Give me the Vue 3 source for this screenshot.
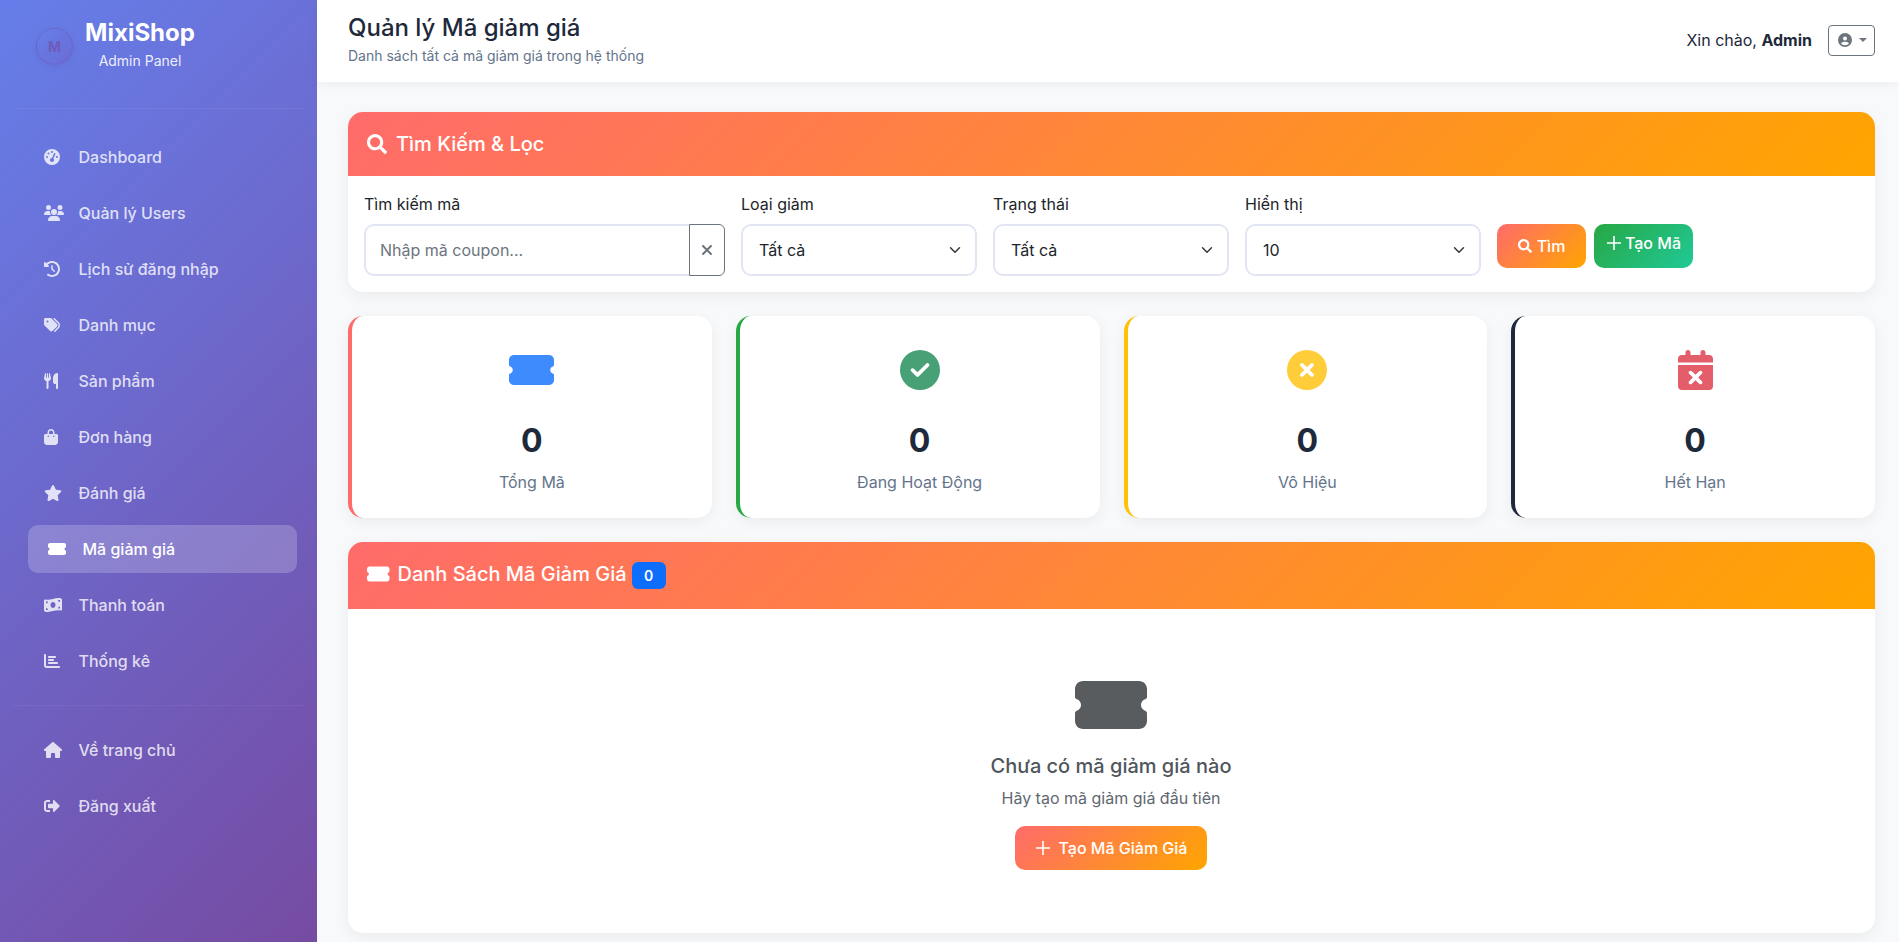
<template>
  <div class="admin-layout">
    <aside class="sidebar">
      <div class="brand">
        <div class="brand-logo">M</div>
        <div class="brand-text">
          <div class="brand-name">MixiShop</div>
          <div class="brand-sub">Admin Panel</div>
        </div>
      </div>

      <nav class="nav-list">
        <a
          v-for="item in navItems"
          :key="item.label"
          class="nav-item"
          :class="{ active: item.active }"
        >
          <span class="nav-icon">
            <svg class="fa" :viewBox="icons[item.icon].box"><path :d="icons[item.icon].d" /></svg>
          </span>
          <span>{{ item.label }}</span>
        </a>
      </nav>

      <div class="nav-divider"></div>

      <nav class="nav-list">
        <a v-for="item in bottomItems" :key="item.label" class="nav-item">
          <span class="nav-icon">
            <svg class="fa" :viewBox="icons[item.icon].box"><path :d="icons[item.icon].d" /></svg>
          </span>
          <span>{{ item.label }}</span>
        </a>
      </nav>
    </aside>

    <div class="main">
      <header class="topbar">
        <div class="topbar-left">
          <h1 class="page-title">Quản lý Mã giảm giá</h1>
          <p class="page-sub">Danh sách tất cả mã giảm giá trong hệ thống</p>
        </div>
        <div class="topbar-right">
          <span class="greeting">Xin chào, <strong>Admin</strong></span>
          <button class="user-btn">
            <svg class="fa" :viewBox="icons.user.box"><path :d="icons.user.d" /></svg>
            <span class="caret"></span>
          </button>
        </div>
      </header>

      <main class="content">
        <section class="panel">
          <div class="panel-head filter-head">
            <svg class="fa" :viewBox="icons.search.box"><path :d="icons.search.d" /></svg>
            <span>Tìm Kiếm &amp; Lọc</span>
          </div>
          <div class="filter-row">
            <div class="field">
              <label>Tìm kiếm mã</label>
              <div class="input-group">
                <input type="text" placeholder="Nhập mã coupon..." />
                <button class="clear-btn">
                  <svg class="fa" :viewBox="icons.xmark.box"><path :d="icons.xmark.d" /></svg>
                </button>
              </div>
            </div>
            <div v-for="f in selects" :key="f.label" class="field">
              <label>{{ f.label }}</label>
              <select>
                <option>{{ f.value }}</option>
              </select>
            </div>
            <div class="filter-actions">
              <button class="btn btn-search">
                <svg class="fa" :viewBox="icons.search.box"><path :d="icons.search.d" /></svg>
                Tìm
              </button>
              <button class="btn btn-create">
                <svg class="plus" viewBox="0 0 16 16"><path d="M8 1v14M1 8h14" /></svg>
                Tạo Mã
              </button>
            </div>
          </div>
        </section>

        <div class="stats">
          <div v-for="s in stats" :key="s.label" class="stat-card" :class="s.tone">
            <svg class="fa stat-icon" :viewBox="icons[s.icon].box"><path :d="icons[s.icon].d" /></svg>
            <div class="stat-value">{{ s.value }}</div>
            <div class="stat-label">{{ s.label }}</div>
          </div>
        </div>

        <section class="panel">
          <div class="panel-head list-head">
            <svg class="fa" :viewBox="icons.ticket.box"><path :d="icons.ticket.d" /></svg>
            <span class="list-title">Danh Sách Mã Giảm Giá</span>
            <span class="badge">0</span>
          </div>
          <div class="empty">
            <svg class="fa empty-icon" :viewBox="icons.ticket.box"><path :d="icons.ticket.d" /></svg>
            <h5>Chưa có mã giảm giá nào</h5>
            <p>Hãy tạo mã giảm giá đầu tiên</p>
            <button class="btn btn-empty">
              <svg class="plus" viewBox="0 0 16 16"><path d="M8 1v14M1 8h14" /></svg>
              Tạo Mã Giảm Giá
            </button>
          </div>
        </section>
      </main>
    </div>
  </div>
</template>

<script setup>
// Font Awesome solid shapes, drawn inline
const icons = {
  gauge: {
    box: "0 0 512 512",
    d: "M0 256a256 256 0 1 1 512 0A256 256 0 1 1 0 256zM288 96a32 32 0 1 0 -64 0 32 32 0 1 0 64 0zM256 416c35.3 0 64-28.7 64-64c0-17.4-6.9-33.1-18.1-44.6L366 161.7c5.3-12.1-.2-26.3-12.3-31.6s-26.3 .2-31.6 12.3L257.9 288c-.6 0-1.3 0-1.9 0c-35.3 0-64 28.7-64 64s28.7 64 64 64zM176 144a32 32 0 1 0 -64 0 32 32 0 1 0 64 0zM96 288a32 32 0 1 0 0-64 32 32 0 1 0 0 64zm352-32a32 32 0 1 0 -64 0 32 32 0 1 0 64 0z",
  },
  users: {
    box: "0 0 640 512",
    d: "M144 0a80 80 0 1 1 0 160A80 80 0 1 1 144 0zM512 0a80 80 0 1 1 0 160A80 80 0 1 1 512 0zM0 298.7C0 239.8 47.8 192 106.7 192h42.7c15.9 0 31 3.5 44.6 9.7c-1.3 7.2-1.9 14.7-1.9 22.3c0 38.2 16.8 72.5 43.3 96c-.2 0-.4 0-.7 0H21.3C9.6 320 0 310.4 0 298.7zM405.3 320c-.2 0-.4 0-.7 0c26.6-23.5 43.3-57.8 43.3-96c0-7.6-.7-15-1.9-22.3c13.6-6.3 28.7-9.7 44.6-9.7h42.7C592.2 192 640 239.8 640 298.7c0 11.8-9.6 21.3-21.3 21.3H405.3zM224 224a96 96 0 1 1 192 0 96 96 0 1 1 -192 0zM128 485.3C128 411.7 187.7 352 261.3 352H378.7C452.3 352 512 411.7 512 485.3c0 14.7-11.9 26.7-26.7 26.7H154.7c-14.7 0-26.7-11.9-26.7-26.7z",
  },
  history: {
    box: "0 0 512 512",
    d: "M75 75L41 41C25.9 25.9 0 36.6 0 57.9V168c0 13.3 10.7 24 24 24H134.1c21.4 0 32.1-25.9 17-41l-30.8-30.8C155 85.5 203 64 256 64c106 0 192 86 192 192s-86 192-192 192c-40.8 0-78.6-12.7-109.7-34.4c-14.5-10.1-34.4-6.6-44.6 7.9s-6.6 34.4 7.9 44.6C151.2 495 201.7 512 256 512c141.4 0 256-114.6 256-256S397.4 0 256 0C185.3 0 121.3 28.7 75 75zm181 53c-13.3 0-24 10.7-24 24V256c0 6.4 2.5 12.5 7 17l72 72c9.4 9.4 24.6 9.4 33.9 0s9.4-24.6 0-33.9l-65-65V152c0-13.3-10.7-24-24-24z",
  },
  tags: {
    box: "0 0 512 512",
    d: "M345 39.1L472.8 168.4c52.4 53 52.4 138.2 0 191.2L360.8 472.9c-9.3 9.4-24.5 9.5-33.9 .2s-9.5-24.5-.2-33.9L438.6 325.9c33.9-34.3 33.9-89.4 0-123.7L310.9 72.9c-9.3-9.4-9.2-24.6 .2-33.9s24.6-9.2 33.9 .2zM0 229.5V80C0 53.5 21.5 32 48 32H197.5c17 0 33.3 6.7 45.3 18.7l168 168c25 25 25 65.5 0 90.5L277.3 442.7c-25 25-65.5 25-90.5 0l-168-168C6.7 262.7 0 246.5 0 229.5zM144 144a32 32 0 1 0 -64 0 32 32 0 1 0 64 0z",
  },
  utensils: {
    box: "0 0 448 512",
    d: "M416 0C400 0 288 32 288 176V288c0 35.3 28.7 64 64 64h32V480c0 17.7 14.3 32 32 32s32-14.3 32-32V352 240 32c0-17.7-14.3-32-32-32zM64 16C64 7.8 57.9 1 49.7 .1S34.2 4.6 32.4 12.5L2.1 148.8C.7 155.1 0 161.5 0 167.9c0 45.9 35.1 83.6 80 87.7V480c0 17.7 14.3 32 32 32s32-14.3 32-32V255.6c44.9-4.1 80-41.8 80-87.7c0-6.4-.7-12.8-2.1-19.1L191.6 12.5c-1.8-8-9.3-13.3-17.4-12.4S160 7.8 160 16V150.2c0 5.4-4.4 9.8-9.8 9.8c-5.1 0-9.3-3.9-9.8-9L127.9 14.6C127.2 6.3 120.3 0 112 0s-15.2 6.3-15.9 14.6L83.7 151c-.5 5.1-4.7 9-9.8 9c-5.4 0-9.8-4.4-9.8-9.8V16zm48.3 152l-.3 0-.3 0 .3-.7 .3 .7z",
  },
  bag: {
    box: "0 0 448 512",
    d: "M160 112c0-35.3 28.7-64 64-64s64 28.7 64 64v48H160V112zm-48 48H48c-26.5 0-48 21.5-48 48V416c0 53 43 96 96 96H352c53 0 96-43 96-96V208c0-26.5-21.5-48-48-48H336V112C336 50.1 285.9 0 224 0S112 50.1 112 112v48zm24 48a24 24 0 1 1 0 48 24 24 0 1 1 0-48zm152 24a24 24 0 1 1 48 0 24 24 0 1 1 -48 0z",
  },
  star: {
    box: "0 0 576 512",
    d: "M316.9 18C311.6 7 300.4 0 288.1 0s-23.4 7-28.8 18L195 150.3 51.4 171.5c-12 1.8-22 10.2-25.7 21.7s-.7 24.2 7.9 32.7L137.8 329 113.2 474.7c-2 12 3 24.2 12.9 31.3s23 8 33.8 2.3l128.3-68.5 128.3 68.5c10.8 5.7 23.9 4.9 33.8-2.3s14.9-19.3 12.9-31.3L438.5 329 542.7 225.9c8.6-8.5 11.7-21.2 7.9-32.7s-13.7-19.9-25.7-21.7L381.2 150.3 316.9 18z",
  },
  ticket: {
    box: "0 0 576 512",
    d: "M0 128C0 92.7 28.7 64 64 64H512c35.3 0 64 28.7 64 64v64c0 8.8-7.4 15.7-15.7 18.6C541.5 217.1 528 235 528 256s13.5 38.9 32.3 45.4c8.3 2.9 15.7 9.8 15.7 18.6v64c0 35.3-28.7 64-64 64H64c-35.3 0-64-28.7-64-64V320c0-8.8 7.4-15.7 15.7-18.6C34.5 294.9 48 277 48 256s-13.5-38.9-32.3-45.4C7.4 207.7 0 200.8 0 192V128z",
  },
  money: {
    box: "0 0 576 512",
    d: "M0 112.5V422.3c0 18 10.1 35 27 41.3c87 32.5 174 10.3 261-11.9c79.8-20.3 159.6-40.7 239.3-18.9c23 6.3 48.7-9.5 48.7-33.4V89.7c0-18-10.1-35-27-41.3C462 15.9 375 38.1 288 60.3C208.2 80.6 128.4 100.9 48.7 79.1C25.6 72.8 0 88.6 0 112.5zM288 352c-44.2 0-80-43-80-96s35.8-96 80-96s80 43 80 96s-35.8 96-80 96zM64 352c35.3 0 64 28.7 64 64H64V352zm64-208c0 35.3-28.7 64-64 64V144h64zM512 304v64H448c0-35.3 28.7-64 64-64zM448 96h64v64c-35.3 0-64-28.7-64-64z",
  },
  chart: {
    box: "0 0 512 512",
    d: "M32 32c17.7 0 32 14.3 32 32V400c0 8.8 7.2 16 16 16H480c17.7 0 32 14.3 32 32s-14.3 32-32 32H80c-44.2 0-80-35.8-80-80V64C0 46.3 14.3 32 32 32zm96 96c0-17.7 14.3-32 32-32l192 0c17.7 0 32 14.3 32 32s-14.3 32-32 32l-192 0c-17.7 0-32-14.3-32-32zm32 64H288c17.7 0 32 14.3 32 32s-14.3 32-32 32H160c-17.7 0-32-14.3-32-32s14.3-32 32-32zm0 96H416c17.7 0 32 14.3 32 32s-14.3 32-32 32H160c-17.7 0-32-14.3-32-32s14.3-32 32-32z",
  },
  home: {
    box: "0 0 576 512",
    d: "M575.8 255.5c0 18-15 32.1-32 32.1h-32l.7 160.2c0 2.7-.2 5.4-.5 8.1V472c0 22.1-17.9 40-40 40H456c-1.1 0-2.2 0-3.3-.1c-1.4 .1-2.8 .1-4.2 .1H416 392c-22.1 0-40-17.9-40-40V448 384c0-17.7-14.3-32-32-32H256c-17.7 0-32 14.3-32 32v64 24c0 22.1-17.9 40-40 40H160 128.1c-1.5 0-3-.1-4.5-.2c-1.2 .1-2.4 .2-3.6 .2H104c-22.1 0-40-17.9-40-40V360c0-.9 0-1.9 .1-2.8V287.6H32c-18 0-32-14-32-32.1c0-9 3-17 10-24L266.4 8c7-7 15-8 22-8s15 2 21 7L564.8 231.5c8 7 12 15 11 24z",
  },
  logout: {
    box: "0 0 512 512",
    d: "M497 273L329 441c-15 15-41 4.5-41-17v-96H152c-13.3 0-24-10.7-24-24v-96c0-13.3 10.7-24 24-24h136V88c0-21.4 25.9-32 41-17l168 168c9.3 9.4 9.3 24.6 0 34zM192 436v-40c0-6.6-5.4-12-12-12H96c-17.7 0-32-14.3-32-32V160c0-17.7 14.3-32 32-32h84c6.6 0 12-5.4 12-12V76c0-6.6-5.4-12-12-12H96c-53 0-96 43-96 96v192c0 53 43 96 96 96h84c6.6 0 12-5.4 12-12z",
  },
  user: {
    box: "0 0 512 512",
    d: "M399 384.2C376.9 345.8 335.4 320 288 320H224c-47.4 0-88.9 25.8-111 64.2c35.2 39.2 86.2 63.8 143 63.8s107.8-24.7 143-63.8zM0 256a256 256 0 1 1 512 0A256 256 0 1 1 0 256zm256 16a72 72 0 1 0 0-144 72 72 0 1 0 0 144z",
  },
  search: {
    box: "0 0 512 512",
    d: "M505 442.7L405.3 343c-4.5-4.5-10.6-7-17-7H372c27.6-35.3 44-79.7 44-128C416 93.1 322.9 0 208 0S0 93.1 0 208s93.1 208 208 208c48.3 0 92.7-16.4 128-44v16.3c0 6.4 2.5 12.5 7 17l99.7 99.7c9.4 9.4 24.6 9.4 33.9 0l28.3-28.3c9.4-9.4 9.4-24.6.1-34zM208 336c-70.7 0-128-57.2-128-128 0-70.7 57.2-128 128-128 70.7 0 128 57.2 128 128 0 70.7-57.2 128-128 128z",
  },
  xmark: {
    box: "0 0 384 512",
    d: "M342.6 150.6c12.5-12.5 12.5-32.8 0-45.3s-32.8-12.5-45.3 0L192 210.7 86.6 105.4c-12.5-12.5-32.8-12.5-45.3 0s-12.5 32.8 0 45.3L146.7 256 41.4 361.4c-12.5 12.5-12.5 32.8 0 45.3s32.8 12.5 45.3 0L192 301.3 297.4 406.6c12.5 12.5 32.8 12.5 45.3 0s12.5-32.8 0-45.3L237.3 256 342.6 150.6z",
  },
  check: {
    box: "0 0 512 512",
    d: "M256 512A256 256 0 1 0 256 0a256 256 0 1 0 0 512zM369 209L241 337c-9.4 9.4-24.6 9.4-33.9 0l-64-64c-9.4-9.4-9.4-24.6 0-33.9s24.6-9.4 33.9 0l47 47L335 175c9.4-9.4 24.6-9.4 33.9 0s9.4 24.6 0 33.9z",
  },
  circleX: {
    box: "0 0 512 512",
    d: "M256 512A256 256 0 1 0 256 0a256 256 0 1 0 0 512zM175 175c9.4-9.4 24.6-9.4 33.9 0l47 47 47-47c9.4-9.4 24.6-9.4 33.9 0s9.4 24.6 0 33.9l-47 47 47 47c9.4 9.4 9.4 24.6 0 33.9s-24.6 9.4-33.9 0l-47-47-47 47c-9.4 9.4-24.6 9.4-33.9 0s-9.4-24.6 0-33.9l47-47-47-47c-9.4-9.4-9.4-24.6 0-33.9z",
  },
  calendarX: {
    box: "0 0 448 512",
    d: "M128 0c17.7 0 32 14.3 32 32V64H288V32c0-17.7 14.3-32 32-32s32 14.3 32 32V64h48c26.5 0 48 21.5 48 48v48H0V112C0 85.5 21.5 64 48 64H96V32c0-17.7 14.3-32 32-32zM0 192H448V464c0 26.5-21.5 48-48 48H48c-26.5 0-48-21.5-48-48V192zM305 305c9.4-9.4 9.4-24.6 0-33.9s-24.6-9.4-33.9 0l-47 47-47-47c-9.4-9.4-24.6-9.4-33.9 0s-9.4 24.6 0 33.9l47 47-47 47c-9.4 9.4-9.4 24.6 0 33.9s24.6 9.4 33.9 0l47-47 47 47c9.4 9.4 24.6 9.4 33.9 0s9.4-24.6 0-33.9l-47-47 47-47z",
  },
};

const navItems = [
  { label: "Dashboard", icon: "gauge" },
  { label: "Quản lý Users", icon: "users" },
  { label: "Lịch sử đăng nhập", icon: "history" },
  { label: "Danh mục", icon: "tags" },
  { label: "Sản phẩm", icon: "utensils" },
  { label: "Đơn hàng", icon: "bag" },
  { label: "Đánh giá", icon: "star" },
  { label: "Mã giảm giá", icon: "ticket", active: true },
  { label: "Thanh toán", icon: "money" },
  { label: "Thống kê", icon: "chart" },
];

const bottomItems = [
  { label: "Về trang chủ", icon: "home" },
  { label: "Đăng xuất", icon: "logout" },
];

const selects = [
  { label: "Loại giảm", value: "Tất cả" },
  { label: "Trạng thái", value: "Tất cả" },
  { label: "Hiển thị", value: "10" },
];

const stats = [
  { label: "Tổng Mã", value: 0, icon: "ticket", tone: "tone-total" },
  { label: "Đang Hoạt Động", value: 0, icon: "check", tone: "tone-active" },
  { label: "Vô Hiệu", value: 0, icon: "circleX", tone: "tone-off" },
  { label: "Hết Hạn", value: 0, icon: "calendarX", tone: "tone-expired" },
];
</script>

<style>
html,
body {
  margin: 0;
  background: #f8f9fa;
}
</style>

<style scoped>
.admin-layout {
  display: flex;
  min-height: 100vh;
  font-family: Inter, "Noto Sans", sans-serif;
  color: #1e293b;
  background: #f8f9fa;
}

.fa {
  display: block;
  fill: currentColor;
  width: auto;
}

/* Sidebar */
.sidebar {
  width: 317px;
  flex-shrink: 0;
  background: linear-gradient(135deg, #667eea 0%, #764ba2 100%);
  box-sizing: border-box;
}

.brand {
  height: 109px;
  margin: 0 13px 24px;
  padding-left: 23px;
  box-sizing: border-box;
  display: flex;
  border-bottom: 1px solid rgba(255, 255, 255, 0.06);
}

.brand-logo {
  width: 37px;
  height: 37px;
  margin-top: 28px;
  border-radius: 50%;
  display: flex;
  align-items: center;
  justify-content: center;
  font-weight: 700;
  font-size: 14px;
  color: #6e5cbc;
  border: 1px solid rgba(118, 75, 162, 0.35);
  box-sizing: border-box;
  background: linear-gradient(135deg, #667eea, #6b6cd4);
  box-shadow: 0 2px 8px rgba(0, 0, 0, 0.05);
}

.brand-text {
  width: 134px;
  text-align: center;
  color: #fff;
}

.brand-name {
  margin-top: 18px;
  font-size: 24px;
  font-weight: 700;
  line-height: 30px;
}

.brand-sub {
  margin-top: 4px;
  font-size: 14px;
  line-height: 17px;
  color: rgba(255, 255, 255, 0.9);
}

.nav-list {
  display: flex;
  flex-direction: column;
  gap: 8px;
  margin: 0 24px;
}

.nav-item {
  height: 48px;
  padding-left: 20px;
  display: flex;
  align-items: center;
  border-radius: 10px;
  font-size: 16px;
  font-weight: 500;
  color: rgba(255, 255, 255, 0.8);
}

.nav-item.active {
  margin-left: 4px;
  margin-right: -4px;
  color: #fff;
  background: rgba(255, 255, 255, 0.2);
}

.nav-icon {
  width: 35px;
  margin-right: -0.5px;
  flex-shrink: 0;
}

.nav-icon .fa {
  height: 16px;
}

.nav-divider {
  height: 1px;
  margin: 20px 13px;
  background: rgba(255, 255, 255, 0.05);
}

/* Top bar */
.main {
  flex: 1;
  min-width: 0;
}

.topbar {
  height: 82px;
  box-sizing: border-box;
  padding: 0 24px 0 31px;
  display: flex;
  align-items: center;
  justify-content: space-between;
  background: #fff;
  box-shadow: 0 2px 10px rgba(0, 0, 0, 0.05);
}

.topbar-left {
  padding-bottom: 6px;
}

.page-title {
  margin: 0;
  font-size: 24px;
  font-weight: 500;
  line-height: 29px;
  color: #1e293b;
}

.page-sub {
  margin: 6px 0 0;
  font-size: 14px;
  line-height: 16px;
  color: #64748b;
}

.topbar-right {
  display: flex;
  align-items: center;
  gap: 16px;
  padding-bottom: 2px;
}

.greeting {
  font-size: 16px;
}

.user-btn {
  width: 47px;
  height: 31px;
  padding: 0 0 0 1px;
  display: flex;
  align-items: center;
  justify-content: center;
  gap: 7px;
  background: #fff;
  color: #6c757d;
  border: 1px solid #6c757d;
  border-radius: 4px;
}

.user-btn .fa {
  height: 14px;
}

.caret {
  width: 0;
  height: 0;
  border-top: 4.5px solid #6c757d;
  border-left: 4.5px solid transparent;
  border-right: 4.5px solid transparent;
}

/* Content */
.content {
  padding: 30px 24px 9px 31px;
  display: flex;
  flex-direction: column;
  gap: 24px;
}

.panel {
  background: #fff;
  border-radius: 15px;
  overflow: hidden;
  box-shadow: 0 4px 15px rgba(0, 0, 0, 0.06);
}

.panel-head {
  display: flex;
  align-items: center;
  color: #fff;
  background: linear-gradient(135deg, #ff6b6b 0%, #ffa500 100%);
}

.filter-head {
  height: 64px;
  padding-left: 19px;
  gap: 9px;
  font-size: 20px;
  font-weight: 500;
}

.filter-head .fa {
  height: 20px;
}

.filter-row {
  padding: 16px;
  display: flex;
  gap: 16px;
}

.field {
  width: 236px;
  flex-shrink: 0;
}

.field:first-child {
  width: 361px;
}

.field label {
  display: block;
  height: 24px;
  margin-bottom: 8px;
  font-size: 16px;
  font-weight: 400;
  line-height: 24px;
  color: #212529;
}

.input-group {
  display: flex;
  height: 52px;
}

.input-group input {
  flex: 1;
  min-width: 0;
  padding: 0 14px;
  font: 400 16px Inter, sans-serif;
  color: #212529;
  border: 2px solid #e2e6f3;
  border-right: none;
  border-radius: 10px 0 0 10px;
  outline: none;
  box-sizing: border-box;
}

.input-group input::placeholder {
  color: #6c757d;
}

.clear-btn {
  width: 36px;
  flex-shrink: 0;
  padding: 0;
  display: flex;
  align-items: center;
  justify-content: center;
  background: #fff;
  color: #6c757d;
  border: 1px solid #6c757d;
  border-radius: 0 6px 6px 0;
}

.clear-btn .fa {
  height: 16px;
}

select {
  width: 100%;
  height: 52px;
  padding: 0 40px 0 16px;
  font: 400 16px Inter, sans-serif;
  color: #212529;
  background: #fff
    url("data:image/svg+xml,%3csvg xmlns='http://www.w3.org/2000/svg' viewBox='0 0 16 16'%3e%3cpath fill='none' stroke='%23343a40' stroke-linecap='round' stroke-linejoin='round' stroke-width='2' d='m2 5 6 6 6-6'/%3e%3c/svg%3e")
    no-repeat right 12px center / 16px 12px;
  border: 2px solid #e2e6f3;
  border-radius: 10px;
  appearance: none;
  box-sizing: border-box;
}

.filter-actions {
  display: flex;
  align-items: flex-start;
  gap: 8px;
  margin-top: 32px;
}

.btn {
  display: flex;
  align-items: center;
  justify-content: center;
  color: #fff;
  border: none;
  font-family: inherit;
}

.btn-search {
  width: 89px;
  height: 44px;
  gap: 5px;
  font-size: 16px;
  font-weight: 500;
  border-radius: 10px;
  background: linear-gradient(135deg, #ff6b6b, #ffa500);
}

.btn-search .fa {
  height: 14px;
}

.btn-create {
  width: 99px;
  height: 44px;
  padding-bottom: 8px;
  gap: 3px;
  font-size: 16px;
  font-weight: 500;
  border-radius: 10px;
  background: linear-gradient(135deg, #28a745, #20c997);
}

.plus {
  display: block;
  width: 16px;
  height: 16px;
  fill: none;
  stroke: currentColor;
  stroke-width: 1.6;
}

/* Stat cards */
.stats {
  display: grid;
  grid-template-columns: repeat(4, 1fr);
  gap: 24px;
}

.stat-card {
  height: 202px;
  box-sizing: border-box;
  padding-top: 34px;
  display: flex;
  flex-direction: column;
  align-items: center;
  background: #fff;
  border-left: 4px solid;
  border-radius: 15px;
  box-shadow: 0 4px 15px rgba(0, 0, 0, 0.06);
}

.stat-icon {
  height: 40px;
  margin-bottom: 32px;
}

.stat-value {
  font-size: 32px;
  font-weight: 700;
  line-height: 38px;
  color: #1e293b;
}

.stat-label {
  margin-top: 10px;
  font-size: 16px;
  line-height: 24px;
  color: #64748b;
}

.tone-total {
  border-left-color: #ff6b6b;
}
.tone-total .stat-icon {
  color: #3d8bfd;
}
.tone-active {
  border-left-color: #28a745;
}
.tone-active .stat-icon {
  color: #47a076;
}
.tone-off {
  border-left-color: #ffc107;
}
.tone-off .stat-icon {
  color: #ffcd39;
}
.tone-expired {
  border-left-color: #1e293b;
}
.tone-expired .stat-icon {
  color: #e35d6a;
}

/* List */
.list-head {
  height: 67px;
  padding-left: 19px;
  font-size: 20px;
  font-weight: 500;
}

.list-head .fa {
  height: 20px;
  margin: 0 8px 4px 0;
}

.list-title {
  margin-bottom: 3px;
}

.badge {
  width: 34px;
  height: 27px;
  margin-left: 5px;
  display: flex;
  align-items: center;
  justify-content: center;
  font-size: 14px;
  font-weight: 600;
  background: #0d6efd;
  border-radius: 6px;
}

.empty {
  height: 324px;
  box-sizing: border-box;
  padding: 64px 1px 0 0;
  display: flex;
  flex-direction: column;
  align-items: center;
}

.empty-icon {
  height: 64px;
  color: #595c5f;
}

.empty h5 {
  margin: 17px 0 0;
  font-size: 20px;
  font-weight: 500;
  line-height: 24px;
  color: #50565c;
}

.empty p {
  margin: 11px 0 0;
  font-size: 16px;
  line-height: 18px;
  color: #5f6870;
}

.btn-empty {
  width: 192px;
  height: 44px;
  margin-top: 19px;
  gap: 8px;
  font-size: 16px;
  font-weight: 500;
  border-radius: 10px;
  background: linear-gradient(135deg, #ff6b6b, #ffa500);
}
</style>
